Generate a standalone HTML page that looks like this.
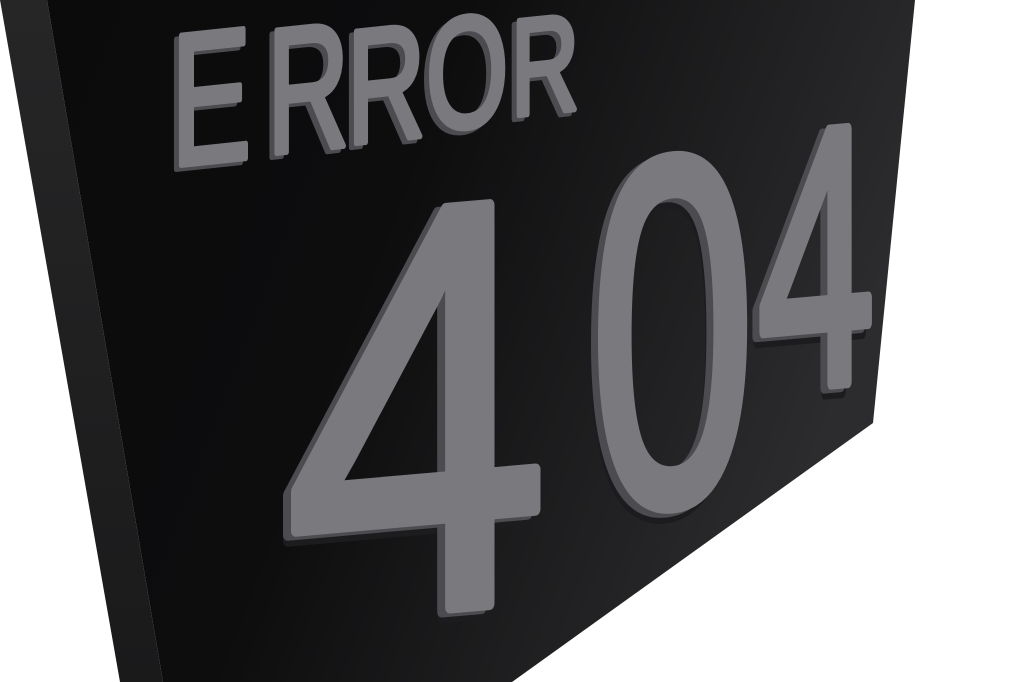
<!DOCTYPE html>
<html><head><meta charset="utf-8"><style>
html,body{margin:0;padding:0;background:#fff;width:1024px;height:682px;overflow:hidden}
svg{display:block}
text{font-family:"Liberation Sans",sans-serif}
</style></head><body>
<svg width="1024" height="682" viewBox="0 0 1024 682" xmlns="http://www.w3.org/2000/svg" overflow="hidden">
<defs>
<linearGradient id="fg" x1="0" y1="0" x2="1" y2="0.3">
<stop offset="0" stop-color="#0b0b0c"/>
<stop offset="0.45" stop-color="#0d0d0e"/>
<stop offset="1" stop-color="#2c2c2e"/>
</linearGradient>
<linearGradient id="sg" x1="0" y1="0" x2="0" y2="1">
<stop offset="0" stop-color="#262627"/>
<stop offset="1" stop-color="#1a1a1b"/>
</linearGradient>
</defs>
<rect width="1024" height="682" fill="#fff"/>
<polygon points="0,0 47,0 163,682 120,682" fill="url(#sg)"/>
<polygon points="47,0 915,0 873,423 512,682 163,682" fill="url(#fg)"/>
<g fill="#1c1c1e" stroke="#1c1c1e" stroke-linejoin="round">
<text transform="translate(277,632) skewY(-5) scale(0.82,1)" font-size="580" stroke-width="12">4</text>
<text transform="translate(582,520) skewY(-5) scale(0.6,1)" font-size="495" stroke-width="12">0</text>
<text transform="translate(752,400) skewY(-5) scale(0.57,1)" font-size="368" stroke-width="12">4</text>
</g>
<g fill="#4c4c50" stroke="#4c4c50" stroke-linejoin="round">
<text transform="translate(277,626) skewY(-5) scale(0.82,1)" font-size="580" stroke-width="12">4</text>
<text transform="translate(583,514) skewY(-5) scale(0.6,1)" font-size="495" stroke-width="12">0</text>
<text transform="translate(751,394) skewY(-5) scale(0.57,1)" font-size="368" stroke-width="12">4</text>
<text transform="translate(166,170) skewY(-6) scale(0.64,1)" font-size="188" stroke-width="6">E</text>
<text transform="translate(262,158) skewY(-6) scale(0.64,1)" font-size="178" stroke-width="6">R</text>
<text transform="translate(342,148) skewY(-6) scale(0.67,1)" font-size="162" stroke-width="6">R</text>
<text transform="translate(421,135) skewY(-6) scale(0.67,1)" font-size="158" stroke-width="6">O</text>
<text transform="translate(506,120) skewY(-6) scale(0.69,1)" font-size="137" stroke-width="6">R</text>
</g>
<g fill="#7a7a7e" stroke="#7a7a7e" stroke-linejoin="round">
<text transform="translate(285,622) skewY(-5) scale(0.82,1)" font-size="580" stroke-width="12">4</text>
<text transform="translate(590,510) skewY(-5) scale(0.6,1)" font-size="495" stroke-width="12">0</text>
<text transform="translate(758,390) skewY(-5) scale(0.57,1)" font-size="368" stroke-width="12">4</text>
<text transform="translate(171,166) skewY(-6) scale(0.64,1)" font-size="188" stroke-width="6">E</text>
<text transform="translate(267,154) skewY(-6) scale(0.64,1)" font-size="178" stroke-width="6">R</text>
<text transform="translate(347,144) skewY(-6) scale(0.67,1)" font-size="162" stroke-width="6">R</text>
<text transform="translate(426,131) skewY(-6) scale(0.67,1)" font-size="158" stroke-width="6">O</text>
<text transform="translate(511,116) skewY(-6) scale(0.69,1)" font-size="137" stroke-width="6">R</text>
</g>
</svg>
</body></html>
